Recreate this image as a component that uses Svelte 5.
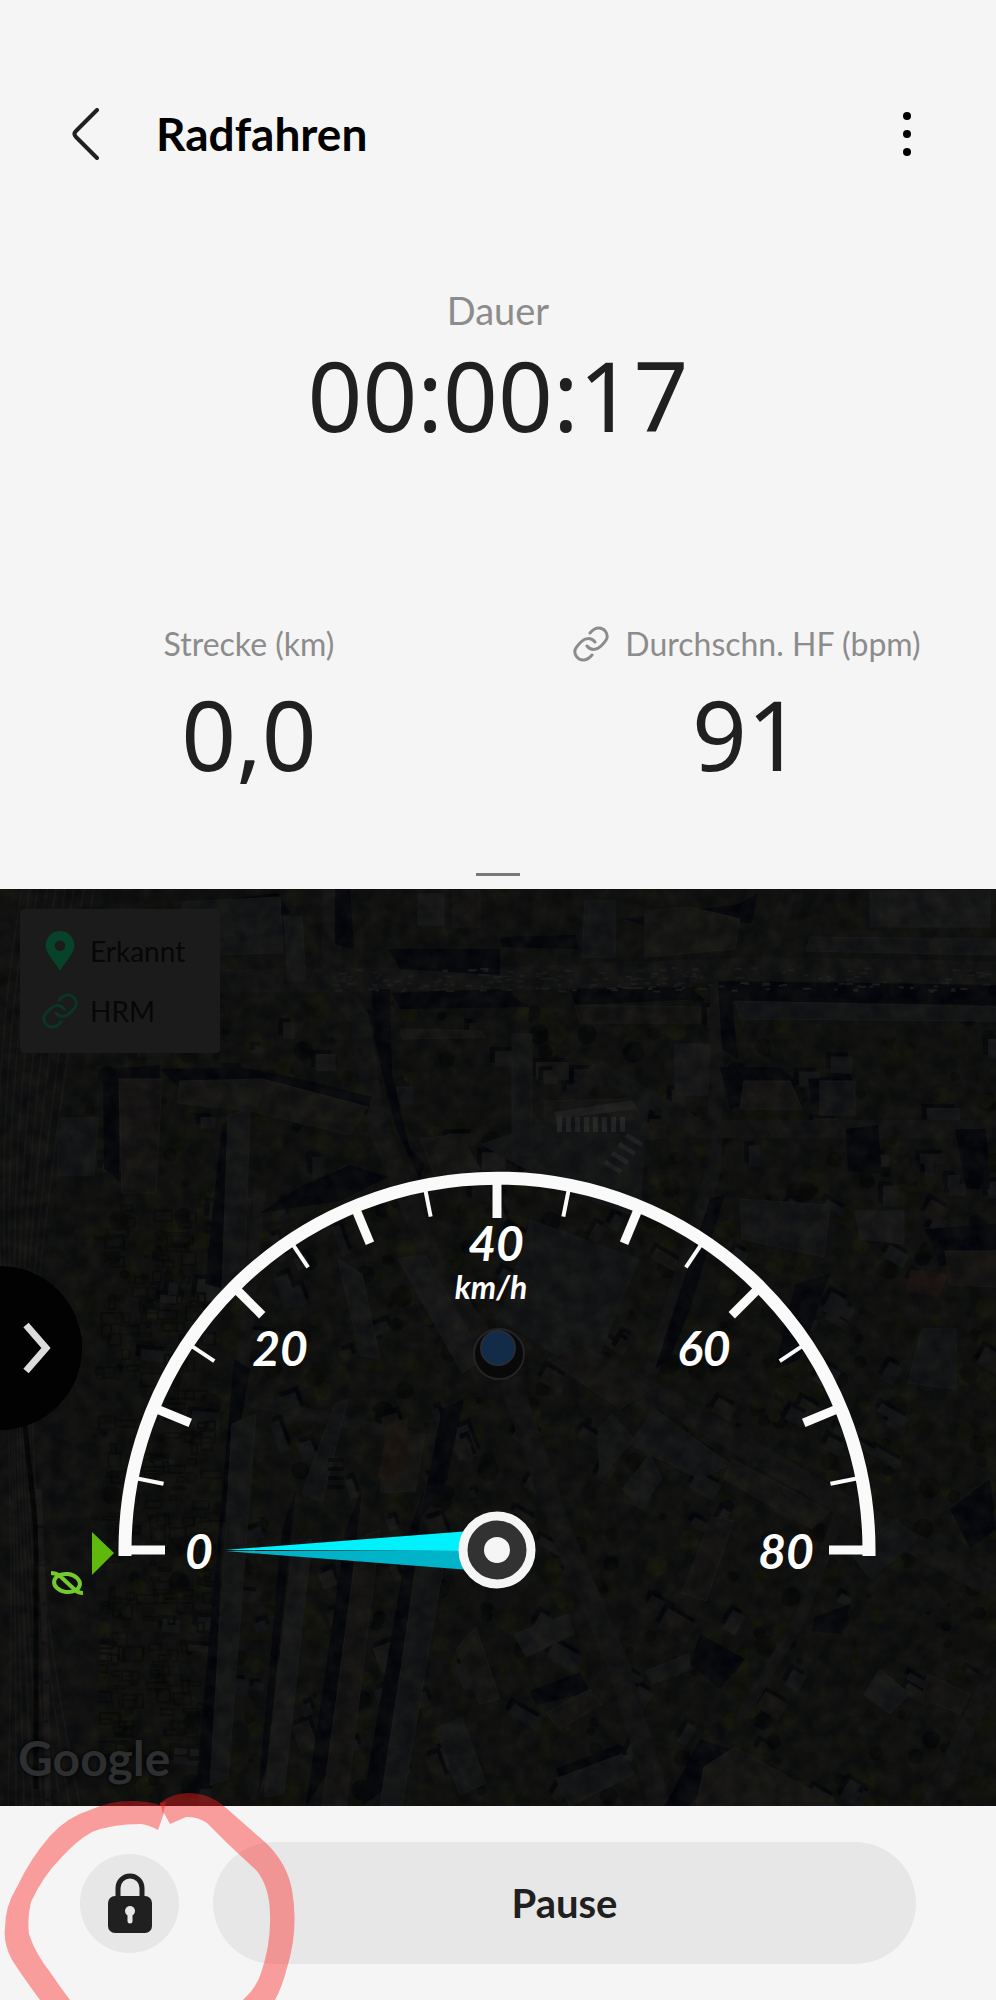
<script>
  const speed = 0;
  const maxSpeed = 80;

  const cx = 497;
  const cy = 661;

  const point = (radius, degrees) => {
    const rad = (degrees * Math.PI) / 180;
    return [cx - radius * Math.cos(rad), cy - radius * Math.sin(rad)];
  };

  const ticks = Array.from({ length: 17 }, (_, i) => {
    const angle = i * 11.25;
    const major = i % 2 === 0;
    const [x1, y1] = point(368, angle);
    const [x2, y2] = point(major ? 332 : 340, angle);
    return { x1, y1, x2, y2, major };
  });

  const scale = [
    { value: 0, x: 199, y: 680 },
    { value: 20, x: 280, y: 477 },
    { value: 40, x: 496, y: 372 },
    { value: 60, x: 704, y: 477 },
    { value: 80, x: 786, y: 680 },
  ];

  // small seeded generator so the aerial view is the same on every load
  let seed = 41;
  const rnd = () => {
    seed = (seed * 16807) % 2147483647;
    return seed / 2147483647;
  };

  const treeColors = ["#13150b", "#16180c", "#0b0c09", "#08090a", "#15150e"];
  const roofColors = ["#18191b", "#1c1c1e", "#191717", "#16181b", "#1a1918"];

  const trees = Array.from({ length: 900 }, () => ({
    x: 85 + rnd() * 911,
    y: 90 + rnd() * 827,
    r: 2 + rnd() * 9,
    fill: treeColors[Math.floor(rnd() * treeColors.length)],
  }));

  const houses = Array.from({ length: 190 }, () => {
    const x = 90 + rnd() * 900;
    const y = 110 + rnd() * 800;
    return {
      x,
      y,
      w: 8 + rnd() * 26,
      h: 6 + rnd() * 16,
      turn: y < 300 ? 0 : x > 500 ? 30 : x > 260 ? 70 : 5,
      fill: roofColors[Math.floor(rnd() * roofColors.length)],
    };
  });

  const cars = Array.from({ length: 170 }, () => ({
    x: 330 + rnd() * 660,
    y: 78 + rnd() * 24,
    w: 3 + rnd() * 6,
  }));

  const gardens = Array.from({ length: 190 }, () => ({
    x: 95 + rnd() * 115,
    y: 310 + rnd() * 560,
    w: 4 + rnd() * 18,
    h: 2 + rnd() * 12,
  }));

  const rails = [4, 12, 20, 29, 38, 47, 56, 66, 76];

  // long roofs, each with the shadow on its west side
  const blocks = [
    "182,13 280,8 283,64 186,66",
    "284,28 302,28 306,92 288,92",
    "119,190 162,190 156,304 122,304",
    "58,229 98,229 94,286 58,286",
    "180,192 262,190 368,218 350,246 250,222 178,214",
    "228,226 250,220 244,410 222,400",
    "418,5 444,5 444,36 418,36",
    "453,2 480,2 480,38 453,38",
    "585,12 615,12 615,68 582,68",
    "645,22 690,18 740,30 735,60 645,68",
    "810,48 996,50 996,66 806,62",
    "870,2 990,2 990,38 870,38",
    "575,116 700,118 700,134 580,134",
    "735,112 996,118 996,132 740,130",
    "400,140 480,142 486,148 402,150",
    "512,145 532,145 532,265 512,265",
    "675,155 710,155 708,206 675,206",
    "744,192 790,192 802,220 740,220",
    "820,192 855,192 855,226 820,226",
    "545,212 634,210 640,230 545,232",
    "740,310 830,316 824,368 742,350",
    "855,322 904,322 904,355 860,350",
    "945,362 996,362 996,398 950,396",
    "922,440 956,440 956,500 908,494",
    "420,250 460,245 480,280 440,300",
    "338,370 362,385 380,470 360,466",
    "398,370 425,365 484,470 462,484",
    "548,470 580,455 650,500 620,520",
    "630,555 654,520 730,575 700,590",
    "732,570 830,622 812,640 724,590",
    "598,540 612,525 634,550 600,590",
    "622,600 650,565 662,590 640,620",
    "712,628 734,632 706,712 682,704",
    "335,515 348,510 322,612 302,604",
    "388,550 425,545 415,602 380,604",
    "232,535 256,525 228,890 210,896",
    "292,660 312,650 284,905 264,908",
    "358,650 380,640 346,917 322,917",
    "418,668 448,650 402,917 380,917",
    "456,760 476,738 500,810 480,815",
    "436,840 462,828 486,894 460,906",
    "514,745 568,725 574,745 526,768",
    "546,824 590,800 602,815 560,840",
    "556,890 622,865 634,885 570,917",
    "704,878 735,858 840,917 696,917",
    "646,782 688,765 690,780 652,795",
    "880,780 910,805 890,825 864,806",
    "928,785 970,805 960,825 922,810",
    "852,665 896,630 918,650 870,690",
  ];

  const shadows = [
    "180,16 278,4 290,24 275,30",
    "103,180 160,176 160,190 119,192 119,290 104,280",
    "160,180 240,178 300,190 372,208 366,226 260,196 180,200",
    "372,100 390,100 392,185 410,260 425,275 420,290 396,240 374,150",
    "335,0 350,0 354,60 335,55",
    "388,60 500,60 500,86 400,80",
    "392,104 500,100 530,118 400,120",
    "500,48 576,46 578,60 502,58",
    "624,30 740,15 758,4 752,34 650,38",
    "570,100 690,98 704,110 575,116",
    "718,92 996,96 996,116 732,112 738,170 722,160",
    "720,178 780,178 800,195 730,220",
    "808,190 850,185 858,205 812,215",
    "846,240 878,236 882,285 848,282",
    "955,240 986,240 990,300 966,300",
    "222,235 232,232 224,400 205,395",
    "300,298 350,276 388,288 340,312 260,324",
    "234,470 250,480 222,640 212,900 196,900",
    "282,640 296,600 266,880 258,906",
    "346,640 362,600 330,880 306,917",
    "410,640 424,600 386,900 362,917",
    "442,520 464,510 444,600 420,630",
    "710,310 725,305 690,420 670,470 655,480",
    "795,395 830,385 800,470 775,480",
    "925,340 996,335 996,360 940,378",
    "530,802 580,783 590,803 536,816",
    "556,880 620,855 628,865 560,890",
    "700,850 730,860 690,917 665,917",
    "950,620 990,590 996,640 970,660",
    "815,728 850,715 842,745 812,742",
    "700,745 745,770 720,800 690,775",
  ];
</script>

<svelte:head>
  <title>Radfahren</title>
</svelte:head>

{#snippet link()}
  <svg class="link" viewBox="0 0 36 40" aria-hidden="true">
    <path
      d="M17 9q4-5 9-5c5 0 9 5 8 10c-1 3-3 5-6 8c-4 4-10 5-14 0M19 31q-4 5-9 5c-5 0-9-5-8-10c1-3 3-5 6-8c4-4 10-5 14 0"
    />
  </svg>
{/snippet}

<div class="screen">
  <header>
    <button class="icon" aria-label="Zurück">
      <svg width="28" height="52" viewBox="0 0 28 52">
        <path d="M25 2L4 23q-3 3 0 6l21 21" />
      </svg>
    </button>
    <h1>Radfahren</h1>
    <button class="icon more" aria-label="Weitere Optionen">
      <svg width="10" height="46" viewBox="0 0 10 46">
        <circle cx="5" cy="5" r="4" />
        <circle cx="5" cy="23" r="4" />
        <circle cx="5" cy="41" r="4" />
      </svg>
    </button>
  </header>

  <section class="duration">
    <h2>Dauer</h2>
    <p class="value">00:00:17</p>
  </section>

  <section class="stats">
    <div>
      <h3>Strecke (km)</h3>
      <p class="value">0,0</p>
    </div>
    <div>
      <h3>{@render link()}Durchschn. HF (bpm)</h3>
      <p class="value">91</p>
    </div>
  </section>

  <div class="handle"></div>

  <main>
    <svg class="scene" viewBox="0 0 996 917" aria-hidden="true">
      <defs>
        <filter
          id="grain"
          x="0"
          y="0"
          width="100%"
          height="100%"
          color-interpolation-filters="sRGB"
        >
          <feTurbulence type="fractalNoise" baseFrequency="0.06" numOctaves="4" seed="8" />
          <feColorMatrix
            values="0.22 0 0 0 -0.06  0.2 0.03 0 0 -0.06  0.12 0 0.03 0 -0.03  0 0 0 0 0.35"
          />
        </filter>
      </defs>
      <rect width="996" height="917" fill="#111211" />

      {#each trees as t}
        <circle cx={t.x} cy={t.y} r={t.r} fill={t.fill} />
      {/each}
      {#each houses as h}
        <g transform="translate({h.x} {h.y}) rotate({h.turn})">
          <rect x="-5" y="-4" width={h.w} height={h.h} fill="#06070c" />
          <rect width={h.w} height={h.h} fill={h.fill} />
        </g>
      {/each}
      {#each gardens as g}
        <rect x={g.x} y={g.y} width={g.w} height={g.h} class="garden" />
      {/each}

      <g class="street">
        <path d="M220 92L500 90L760 80L996 84" stroke-width="24" />
        <path d="M332 0V96L360 130L375 230L440 390L500 470" stroke-width="20" />
        <path d="M790 0L764 84L718 100L714 280L640 520" stroke-width="15" />
        <path d="M530 250L600 180L700 240L996 240" stroke-width="18" />
        <path d="M500 420L680 520L850 620L996 700" stroke-width="22" />
        <path d="M510 490L560 640L620 780L660 917" stroke-width="22" />
        <path d="M840 625L800 730L740 830" stroke-width="12" />
        <path d="M996 780L930 917" stroke-width="18" />
        <path d="M260 300L240 510L470 560" stroke-width="12" />
        <path d="M0 -10H90L50 210L60 420L100 640L98 917H0z" class="rail-bed" />
      </g>
      <path d="M480 255L650 200L640 330L560 300z M530 330L640 370L590 490L500 430z" fill="#17191b" />

      {#each shadows as points}
        <polygon {points} fill="#05060d" />
      {/each}
      {#each blocks as points, i}
        <polygon {points} fill={roofColors[i % roofColors.length]} stroke="#1f1f20" />
      {/each}

      <polygon points="388,535 408,528 404,590 378,588" fill="#201813" />
      <polygon points="910,380 950,385 938,408 906,402" fill="#1f1415" />
      <polygon points="554,223 632,211 637,220 556,230" fill="#29292a" />
      {#each [0, 1, 2, 3, 4, 5, 6, 7] as i}
        <rect x={557 + i * 9} y="228" width="5" height="15" fill="#303032" />
      {/each}
      {#each [0, 1, 2, 3] as i}
        <path d="M{626 - i * 7} {246 + i * 9}l16 10" stroke="#2c2c2e" stroke-width="5" />
        <path d="M328 {571 + i * 9}h16" stroke="#07080c" stroke-width="4" />
      {/each}
      {#each cars as c}
        <rect x={c.x} y={c.y} width={c.w} height="2" fill="#232325" />
      {/each}
      {#each rails as x}
        <path d="M{x + 18} 0Q{x - 16} 200 {x / 2} 400T{x + 4} 917" class="rail" />
      {/each}
      <path d="M17 462L36 640V900" stroke="#030304" stroke-width="5" fill="none" />
      <path d="M39 600L46 780L48 917" class="train" />

      <rect width="996" height="917" filter="url(#grain)" />

      <circle cx="499" cy="465" r="25" fill="#0a0909" stroke="#242426" stroke-width="2" />
      <circle cx="498" cy="459" r="17" fill="#122b48" stroke="#252c35" stroke-width="2" />
    </svg>

    <svg
      class="gauge"
      viewBox="0 0 996 917"
      role="img"
      aria-label="{speed} von {maxSpeed} km/h"
    >
      <path d="M125 667V661A372 372 0 0 1 869 661V667" class="arc" />
      {#each ticks as t}
        <line x1={t.x1} y1={t.y1} x2={t.x2} y2={t.y2} class:major={t.major} />
      {/each}
      {#each scale as s}
        <text x={s.x} y={s.y}>{s.value}</text>
      {/each}
      <text x="491" y="410" class="unit">km/h</text>

      <path d="M225 661L470 642V662z" fill="#00f0fc" />
      <path d="M225 662H470V681z" fill="#00b3c8" />
      <circle cx={cx} cy={cy} r="34" class="hub" />
      <circle cx={cx} cy={cy} r="13" fill="#f5f5f5" />

      <path d="M92 643L114 664L92 686z" fill="#5fb80b" />
      <g class="average">
        <ellipse cx="67" cy="694" rx="13" ry="9" transform="rotate(8 67 694)" />
        <path d="M51 684q5 0 9 3l14 13q4 4 9 4" />
      </g>
    </svg>

    <ul class="sensors">
      <li>
        <svg class="pin" viewBox="0 0 30 42" aria-hidden="true">
          <path
            d="M15 0a15 15 0 0 1 15 15c0 10-10 17-15 27C10 32 0 25 0 15A15 15 0 0 1 15 0zm0 10a5 5 0 1 0 0 11 5 5 0 0 0 0-11z"
          />
        </svg>
        Erkannt
      </li>
      <li>{@render link()}HRM</li>
    </ul>

    <button class="drawer" aria-label="Nächste Anzeige">
      <svg width="32" height="56" viewBox="0 0 32 56">
        <path d="M4 5L24 28L4 51" />
      </svg>
    </button>

    <span class="brand">Google</span>
  </main>

  <footer>
    <button class="lock" aria-label="Bildschirm sperren">
      <svg width="44" height="60" viewBox="0 0 44 60">
        <path d="M10 27V15a12 12 0 0 1 24 0v12" fill="none" stroke="#202020" stroke-width="5" />
        <rect y="23" width="44" height="37" rx="7" fill="#202020" />
        <circle cx="22" cy="38" r="5" fill="#e7e7e7" />
        <path d="M22 38v10" stroke="#e7e7e7" stroke-width="5" stroke-linecap="round" />
      </svg>
    </button>
    <button class="pause">Pause</button>

    <svg class="marker" viewBox="0 0 320 220" aria-hidden="true">
      <path
        d="M40 220Q23 197 12 180Q3 163 5 148Q5 126 17 107Q30 79 50 56Q67 37 90 30Q110 21 130 21Q148 21 160 25L160 23Q173 13 188 13Q209 13 225 27L266 63Q287 83 292 110Q299 149 287 188Q282 207 275 220H243Q257 207 261 193Q271 164 270 135Q270 108 257 91L228 64L207 43Q197 36 186 37L170 44L164 33L158 50Q149 45 141 44Q112 44 92 52Q77 60 60 79Q43 96 31 122Q27 138 29 154Q35 173 50 192Q58 204 70 220z"
      />
      <path d="M160 23L166 22L163 34z" />
    </svg>
  </footer>
</div>

<style>
  :global(body) {
    margin: 0;
    background: #f5f5f5;
  }

  .screen {
    display: flex;
    flex-direction: column;
    overflow: hidden;
    background: #f5f5f5;
    color: #202020;
    font-family: Lato, "Open Sans", sans-serif;
  }

  h1,
  h2,
  h3,
  p,
  ul {
    margin: 0;
    padding: 0;
  }

  button {
    border: 0;
    padding: 0;
    color: inherit;
    font: inherit;
    cursor: pointer;
  }

  header {
    display: flex;
    align-items: center;
    gap: 56px;
    padding: 94px 84px 0 72px;
  }

  h1 {
    flex: 1;
    color: #000;
    font-size: 46px;
    font-weight: 700;
    line-height: 80px;
  }

  .icon {
    display: flex;
    background: none;
  }

  .icon path {
    fill: none;
    stroke: #202020;
    stroke-width: 4;
    stroke-linecap: round;
  }

  .duration {
    padding-top: 112px;
    text-align: center;
  }

  h2,
  h3 {
    color: #8c8c8c;
    font-weight: 400;
  }

  h2 {
    padding-bottom: 5px;
    font-size: 38px;
    line-height: 48px;
  }

  h3 {
    display: flex;
    align-items: center;
    justify-content: center;
    gap: 16px;
    font-size: 32px;
    line-height: 40px;
    white-space: nowrap;
  }

  .value {
    font-family: "Noto Sans", sans-serif;
    font-size: 96px;
    line-height: 112px;
  }

  .stats {
    display: grid;
    grid-template-columns: 1fr 1fr;
    padding-top: 173px;
    text-align: center;
  }

  .stats .value {
    padding-top: 14px;
  }

  .link {
    width: 36px;
    height: 40px;
    fill: none;
    stroke: #8c8c8c;
    stroke-width: 3;
    stroke-linecap: round;
  }

  .handle {
    align-self: center;
    width: 44px;
    height: 3px;
    margin: 83px 0 13px;
    background: #777;
  }

  main {
    position: relative;
    background: #101110;
  }

  .scene {
    display: block;
    width: 100%;
  }

  .street path {
    fill: none;
    stroke: #161617;
  }

  .street .rail-bed {
    fill: #121213;
    stroke: none;
  }

  .rail {
    fill: none;
    stroke: #1b1a1b;
    stroke-width: 2;
  }

  .train {
    fill: none;
    stroke: #211d1e;
    stroke-width: 6;
    stroke-dasharray: 36 3;
  }

  .garden {
    fill: none;
    stroke: #0a0b0a;
    stroke-width: 2;
  }

  .gauge {
    position: absolute;
    inset: 0;
    width: 100%;
  }

  .arc {
    fill: none;
    stroke: #fafafa;
    stroke-width: 13;
  }

  .gauge line {
    stroke: #fafafa;
    stroke-width: 4;
  }

  .gauge line.major {
    stroke-width: 9;
  }

  .gauge text {
    fill: #fff;
    font-size: 48px;
    font-style: italic;
    font-weight: 700;
    text-anchor: middle;
  }

  .gauge .unit {
    font-size: 32px;
  }

  .hub {
    fill: #323233;
    stroke: #f5f5f5;
    stroke-width: 9;
  }

  .average {
    fill: none;
    stroke: #74c92c;
    stroke-width: 4;
  }

  .sensors {
    position: absolute;
    top: 20px;
    left: 20px;
    display: flex;
    flex-direction: column;
    gap: 20px;
    box-sizing: border-box;
    min-width: 200px;
    padding: 22px;
    border-radius: 4px;
    background: #1b1b1b;
    color: #070707;
    font-size: 28px;
    line-height: 40px;
    list-style: none;
  }

  .sensors li {
    display: flex;
    align-items: center;
    gap: 12px;
  }

  .sensors .link {
    stroke: #0b3426;
  }

  .pin {
    width: 36px;
    height: 40px;
    fill: #07432a;
  }

  .drawer {
    position: absolute;
    top: 50%;
    left: 0;
    display: flex;
    align-items: center;
    width: 82px;
    height: 164px;
    padding-left: 22px;
    border-radius: 0 82px 82px 0;
    background: #020202;
    transform: translateY(-50%);
  }

  .drawer path {
    fill: none;
    stroke: #dcdcdc;
    stroke-width: 7;
  }

  .brand {
    position: absolute;
    bottom: 20px;
    left: 18px;
    color: #2d2e30;
    font-size: 48px;
    font-weight: 700;
    line-height: 56px;
    text-shadow: 0 0 4px #000;
  }

  footer {
    position: relative;
    display: flex;
    align-items: center;
    gap: 34px;
    padding: 36px 80px;
  }

  .lock {
    display: flex;
    flex: none;
    align-items: center;
    justify-content: center;
    width: 99px;
    height: 99px;
    border-radius: 50%;
    background: #e7e7e7;
  }

  .pause {
    flex: 1;
    border-radius: 61px;
    background: #e7e7e7;
    font-size: 40px;
    font-weight: 700;
    line-height: 122px;
  }

  .marker {
    position: absolute;
    bottom: 0;
    left: 0;
    width: 320px;
    height: 220px;
    fill: rgba(255, 30, 30, 0.41);
    pointer-events: none;
  }
</style>
